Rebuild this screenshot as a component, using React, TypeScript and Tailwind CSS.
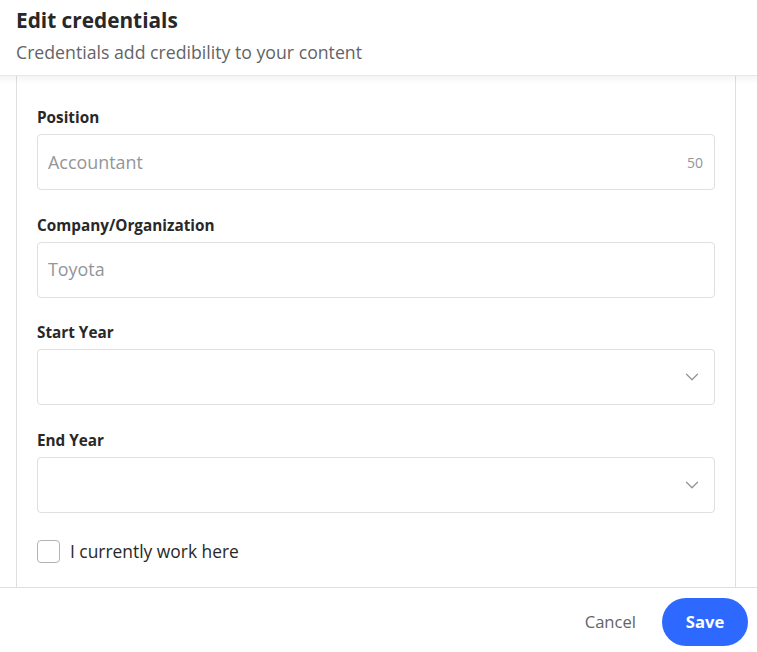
import { ChevronDown } from "lucide-react";

const font = { fontFamily: '"Open Sans", "Noto Sans", sans-serif' };

const Field = ({ label, children }: { label: string; children: React.ReactNode }) => (
  <div className="flex flex-col">
    <label className="text-[15.3px] leading-5 font-bold text-[#282829] mb-[7px]">{label}</label>
    {children}
  </div>
);

const Select = () => (
  <div className="h-[56px] rounded-[4px] border border-[#dedfe0] flex items-center justify-end pr-[11px]">
    <ChevronDown className="h-[22px] w-[22px] text-[#939598]" strokeWidth={1.4} />
  </div>
);

export default function App() {
  return (
    <div className="w-[757px] h-[652px] bg-white flex flex-col overflow-hidden" style={font}>
      <div className="h-[76px] px-4 pt-[5px] border-b border-[#e6e7e8] shrink-0">
        <h1 className="text-[20.8px] leading-[30px] font-bold text-[#282829]">Edit credentials</h1>
        <p className="text-[17.7px] leading-[26px] text-[#636466] mt-[4px]">Credentials add credibility to your content</p>
      </div>

      <div className="relative flex-1 min-h-0">
        <div className="absolute inset-x-0 top-0 h-[8px] bg-gradient-to-b from-black/[0.04] to-transparent" />
        <div className="ml-4 mr-[21px] h-full border-x border-[#dedfe0] px-5 pt-[31px] flex flex-col gap-[24.5px]">
          <Field label="Position">
            <div className="h-[56px] rounded-[4px] border border-[#dedfe0] flex items-center pl-[10px] pr-[11px]">
              <span className="flex-1 text-[17.9px] text-[#939598]">Accountant</span>
              <span className="text-[14px] text-[#939598]">50</span>
            </div>
          </Field>
          <Field label="Company/Organization">
            <div className="h-[56px] rounded-[4px] border border-[#dedfe0] flex items-center px-[10px]">
              <span className="text-[17.9px] text-[#939598]">Toyota</span>
            </div>
          </Field>
          <Field label="Start Year">
            <Select />
          </Field>
          <Field label="End Year">
            <Select />
          </Field>
          <label className="flex items-center gap-[10px] mt-[3px]">
            <span className="h-[23px] w-[23px] shrink-0 rounded-[4px] border border-[#b1b3b6] bg-white" />
            <span className="text-[17.4px] leading-[23px] text-[#282829]">I currently work here</span>
          </label>
        </div>
      </div>

      <div className="h-[65px] shrink-0 border-t border-[#dedfe0] flex items-center justify-end gap-[26px] pr-[9px] pt-[4px]">
        <button className="text-[16.6px] font-medium text-[#636466]">Cancel</button>
        <button className="h-[48px] w-[86px] rounded-full bg-[#2e69ff] text-white text-[16.6px] font-bold">Save</button>
      </div>
    </div>
  );
}
